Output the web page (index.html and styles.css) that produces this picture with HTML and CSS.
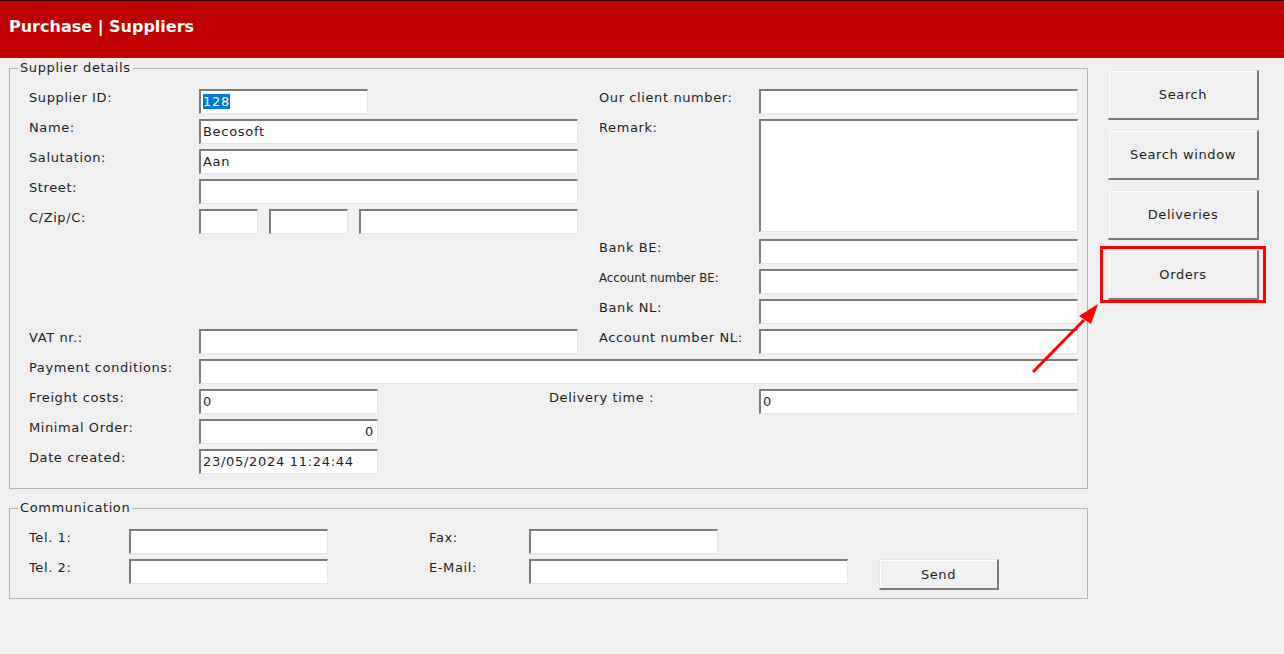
FILE: index.html
```html
<!DOCTYPE html>
<html lang="en">
<head>
    <meta charset="UTF-8">
    <link rel="stylesheet" href="styles.css">
    <title>Purchase | Suppliers</title>
</head>
<body>
    <div class="header">
        <h1>Purchase | Suppliers</h1>
    </div>
    <div class="page">
        <div class="forms">
            <!-- Supplier details -->
            <fieldset class="group">
                <legend>Supplier details</legend>
                <div class="details">
                    <label class="lbl">Supplier ID:</label>
                    <div class="field short"><span class="selected">128</span></div>
                    <label class="lbl rlbl">Our client number:</label>
                    <div class="field rin"></div>

                    <label class="lbl">Name:</label>
                    <div class="field">Becosoft</div>
                    <label class="lbl rlbl">Remark:</label>
                    <div class="field rin remark"></div>

                    <label class="lbl">Salutation:</label>
                    <div class="field">Aan</div>

                    <label class="lbl">Street:</label>
                    <div class="field"></div>

                    <label class="lbl">C/Zip/C:</label>
                    <div class="zip">
                        <div class="field country"></div>
                        <div class="field zipcode"></div>
                        <div class="field city"></div>
                    </div>

                    <label class="lbl rlbl bank-be">Bank BE:</label>
                    <div class="field rin"></div>
                    <label class="lbl rlbl narrow">Account number BE:</label>
                    <div class="field rin"></div>
                    <label class="lbl rlbl">Bank NL:</label>
                    <div class="field rin"></div>

                    <label class="lbl">VAT nr.:</label>
                    <div class="field"></div>
                    <label class="lbl rlbl">Account number NL:</label>
                    <div class="field rin"></div>

                    <label class="lbl">Payment conditions:</label>
                    <div class="field wide"></div>

                    <label class="lbl">Freight costs:</label>
                    <div class="freight">
                        <div class="field num">0</div>
                        <label class="lbl delivery">Delivery time :</label>
                    </div>
                    <div class="field rin">0</div>

                    <label class="lbl">Minimal Order:</label>
                    <div class="field num right">0</div>

                    <label class="lbl">Date created:</label>
                    <div class="field num">23/05/2024 11:24:44</div>
                </div>
            </fieldset>

            <!-- Communication -->
            <fieldset class="group comm">
                <legend>Communication</legend>
                <div class="contact">
                    <label class="lbl">Tel. 1:</label>
                    <div class="field"></div>
                    <span></span>
                    <label class="lbl">Fax:</label>
                    <div class="field fax"></div>
                    <span></span>
                    <span></span>

                    <label class="lbl">Tel. 2:</label>
                    <div class="field"></div>
                    <span></span>
                    <label class="lbl">E-Mail:</label>
                    <div class="field"></div>
                    <span></span>
                    <button class="btn send" type="button">Send</button>
                </div>
            </fieldset>
        </div>

        <div class="actions">
            <button class="btn side" type="button">Search</button>
            <button class="btn side" type="button">Search window</button>
            <button class="btn side" type="button">Deliveries</button>
            <div class="marked">
                <button class="btn side" type="button">Orders</button>
            </div>
        </div>

        <svg class="arrow" width="90" height="90" viewBox="0 0 90 90">
            <line x1="13" y1="77" x2="64" y2="25" stroke="#ff0000" stroke-width="3"/>
            <polygon points="78,9 59,21 71,29" fill="#ff0000"/>
        </svg>
    </div>
</body>
</html>
```

FILE: styles.css
```css
body {
    margin: 0;
    background-color: #f0f0f0;
    font-family: "DejaVu Sans", sans-serif;
    font-size: 13px;
    letter-spacing: 0.6px;
    color: #1e1e1e;
}
.header {
    height: 57px;
    background-color: #c00000;
    border-top: 1px solid #3c0000;
}
.header h1 {
    margin: 0;
    padding: 16px 0 0 9px;
    color: #fff;
    font-size: 16px;
    font-weight: bold;
    letter-spacing: 0;
}
.page {
    position: relative;
    display: flex;
    padding-left: 9px;
}
.forms {
    width: 1079px;
}
/* group boxes */
.group {
    margin: 2px 0 0 0;
    padding: 13px 9px 14px 19px;
    border: 1px solid #b4b4b4;
}
.group legend {
    margin-left: -11px;
    padding: 0 2px;
    font-size: 13px;
    line-height: 16px;
}
.comm {
    margin-top: 11px;
    padding-bottom: 14px;
}
/* rows of the supplier form */
.details {
    display: grid;
    grid-template-columns: 170px 379px 21px 160px 319px;
    grid-auto-rows: 25px;
    row-gap: 5px;
}
.lbl {
    grid-column: 1;
    padding-top: 1px;
    white-space: nowrap;
}
.rlbl {
    grid-column: 4;
}
.narrow {
    font-family: "DejaVu Sans Condensed", "DejaVu Sans", sans-serif;
    font-stretch: condensed;
    letter-spacing: 0;
}
.bank-be {
    grid-row: 6;
}
.field {
    box-sizing: border-box;
    height: 25px;
    padding: 3px 3px 0 2px;
    background-color: #fff;
    border-style: solid;
    border-width: 2px 1px 1px 2px;
    border-color: #7c7c7c #e6e6e6 #e6e6e6 #7c7c7c;
    letter-spacing: 0.7px;
    white-space: nowrap;
}
.short {
    width: 169px;
}
.selected {
    background-color: #0078d7;
    color: #fff;
}
.rin {
    grid-column: 5;
}
.remark {
    grid-row: 2 / span 4;
    height: 113px;
}
.zip {
    display: flex;
}
.country {
    width: 59px;
}
.zipcode {
    width: 79px;
    margin-left: 11px;
}
.city {
    flex: 1;
    margin-left: 11px;
}
.wide {
    grid-column: 2 / span 4;
}
.freight {
    grid-column: 2 / span 3;
    display: flex;
}
.num {
    width: 179px;
}
.right {
    text-align: right;
}
.delivery {
    margin-left: 171px;
}
/* communication rows */
.contact {
    display: grid;
    grid-template-columns: 100px 199px 101px 100px 319px 31px 120px;
    grid-auto-rows: 25px;
    row-gap: 5px;
}
.contact .lbl {
    grid-column: auto;
}
.fax {
    width: 189px;
}
/* buttons */
.btn {
    box-sizing: border-box;
    background-color: #f0f0f0;
    border-style: solid;
    border-width: 1px 2px 2px 1px;
    border-color: #e8e8e8 #7a7a7a #7a7a7a #e8e8e8;
    box-shadow: inset 1px 1px #fff;
    font-family: "DejaVu Sans", sans-serif;
    font-size: 13px;
    letter-spacing: 0.6px;
    color: #1e1e1e;
    padding: 0;
}
.send {
    width: 120px;
    height: 31px;
}
.actions {
    display: flex;
    flex-direction: column;
    gap: 10px;
    margin: 12px 0 0 20px;
}
.side {
    display: block;
    width: 151px;
    height: 50px;
}
.marked {
    position: relative;
}
.marked::after {
    content: "";
    position: absolute;
    top: -4px;
    left: -8px;
    right: -7px;
    bottom: -3px;
    border: 3px solid #ff0000;
}
.arrow {
    position: absolute;
    left: 1020px;
    top: 237px;
}
```
